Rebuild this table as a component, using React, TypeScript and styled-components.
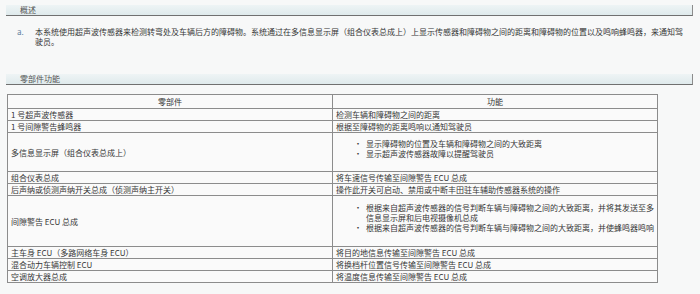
import React from 'react';
import styled, {createGlobalStyle} from 'styled-components';

const GlobalStyle = createGlobalStyle`
  html, body {
    margin: 0;
    padding: 0;
    background: #f7f8f8;
  }
  body {
    font-family: "Noto Sans CJK SC", "DejaVu Sans", sans-serif;
    font-size: 8px;
    color: #363636;
  }
`;

const Page = styled.div`
  width: 700px;
  height: 294px;
  box-sizing: border-box;
  padding: 5px 7px 0 6px;
  display: flex;
  flex-direction: column;
  overflow: hidden;
`;

const SectionBar = styled.div<{$gap?: number}>`
  height: 10px;
  line-height: 10px;
  margin-top: ${(p) => p.$gap ?? 0}px;
  padding-left: 14px;
  background: linear-gradient(to bottom, #eef4f5, #dfeaec);
  border-bottom: 1px solid #707070;
  border-right: 1px solid #8c8c8c;
  color: #555;
  font-size: 8px;
`;

const Para = styled.div`
  display: flex;
  margin-top: 11px;
  padding-left: 11px;
  line-height: 10px;
`;

const Marker = styled.span`
  width: 18px;
  flex-shrink: 0;
  color: #5d7fa0;
`;

const ParaText = styled.span`
  width: 650px;
`;

const Table = styled.table`
  margin-top: 9px;
  margin-left: 1px;
  width: 650px;
  border-collapse: collapse;
  table-layout: fixed;
  background: #fafafa;
  border: 1px solid #8a8a8a;
`;

const HeadCell = styled.th`
  border: 1px solid #8c8c8c;
  padding: 2px 3px 1px;
  line-height: 10px;
  font-weight: normal;
  text-align: center;
  color: #333;
`;

const Cell = styled.td`
  border: 1px solid #8c8c8c;
  padding: 0 3px;
  line-height: 11px;
  vertical-align: middle;
  white-space: nowrap;
`;

const List = styled.ul<{$top: number; $bottom: number}>`
  list-style: none;
  margin: ${(p) => p.$top}px 0 ${(p) => p.$bottom}px;
  padding: 0 0 0 18px;
  line-height: 10px;
  white-space: normal;
`;

const Item = styled.li`
  position: relative;
  padding-left: 12px;
  &::before {
    content: '·';
    position: absolute;
    left: 0;
    top: 0;
  }
`;

type Row = {part: string; fn?: string; items?: string[]; list?: [number, number]};

const rows: Row[] = [
  {part: '1 号超声波传感器', fn: '检测车辆和障碍物之间的距离'},
  {part: '1 号间隙警告蜂鸣器', fn: '根据至障碍物的距离鸣响以通知驾驶员'},
  {
    part: '多信息显示屏（组合仪表总成上）',
    items: ['显示障碍物的位置及车辆和障碍物之间的大致距离', '显示超声波传感器故障以提醒驾驶员'],
    list: [6, 12],
  },
  {part: '组合仪表总成', fn: '将车速信号传输至间隙警告 ECU 总成'},
  {part: '后声纳或侦测声纳开关总成（侦测声纳主开关）', fn: '操作此开关可启动、禁用或中断丰田驻车辅助传感器系统的操作'},
  {
    part: '间隙警告 ECU 总成',
    items: [
      '根据来自超声波传感器的信号判断车辆与障碍物之间的大致距离，并将其发送至多信息显示屏和后电视摄像机总成',
      '根据来自超声波传感器的信号判断车辆与障碍物之间的大致距离，并使蜂鸣器鸣响',
    ],
    list: [7, 13],
  },
  {part: '主车身 ECU（多路网络车身 ECU）', fn: '将目的地信息传输至间隙警告 ECU 总成'},
  {part: '混合动力车辆控制 ECU', fn: '将换档杆位置信号传输至间隙警告 ECU 总成'},
  {part: '空调放大器总成', fn: '将温度信息传输至间隙警告 ECU 总成'},
];

export default function App() {
  return (
    <>
      <GlobalStyle />
      <Page>
        <SectionBar>概述</SectionBar>
        <Para>
          <Marker>a.</Marker>
          <ParaText>
            本系统使用超声波传感器来检测转弯处及车辆后方的障碍物。系统通过在多信息显示屏（组合仪表总成上）上显示传感器和障碍物之间的距离和障碍物的位置以及鸣响蜂鸣器，来通知驾驶员。
          </ParaText>
        </Para>
        <SectionBar $gap={27}>零部件功能</SectionBar>
        <Table>
          <colgroup>
            <col style={{width: 325}} />
            <col style={{width: 325}} />
          </colgroup>
          <thead>
            <tr>
              <HeadCell>零部件</HeadCell>
              <HeadCell>功能</HeadCell>
            </tr>
          </thead>
          <tbody>
            {rows.map((r) => (
              <tr key={r.part}>
                <Cell>{r.part}</Cell>
                <Cell>
                  {r.items && r.list ? (
                    <List $top={r.list[0]} $bottom={r.list[1]}>
                      {r.items.map((it) => (
                        <Item key={it}>{it}</Item>
                      ))}
                    </List>
                  ) : (
                    r.fn
                  )}
                </Cell>
              </tr>
            ))}
          </tbody>
        </Table>
      </Page>
    </>
  );
}
